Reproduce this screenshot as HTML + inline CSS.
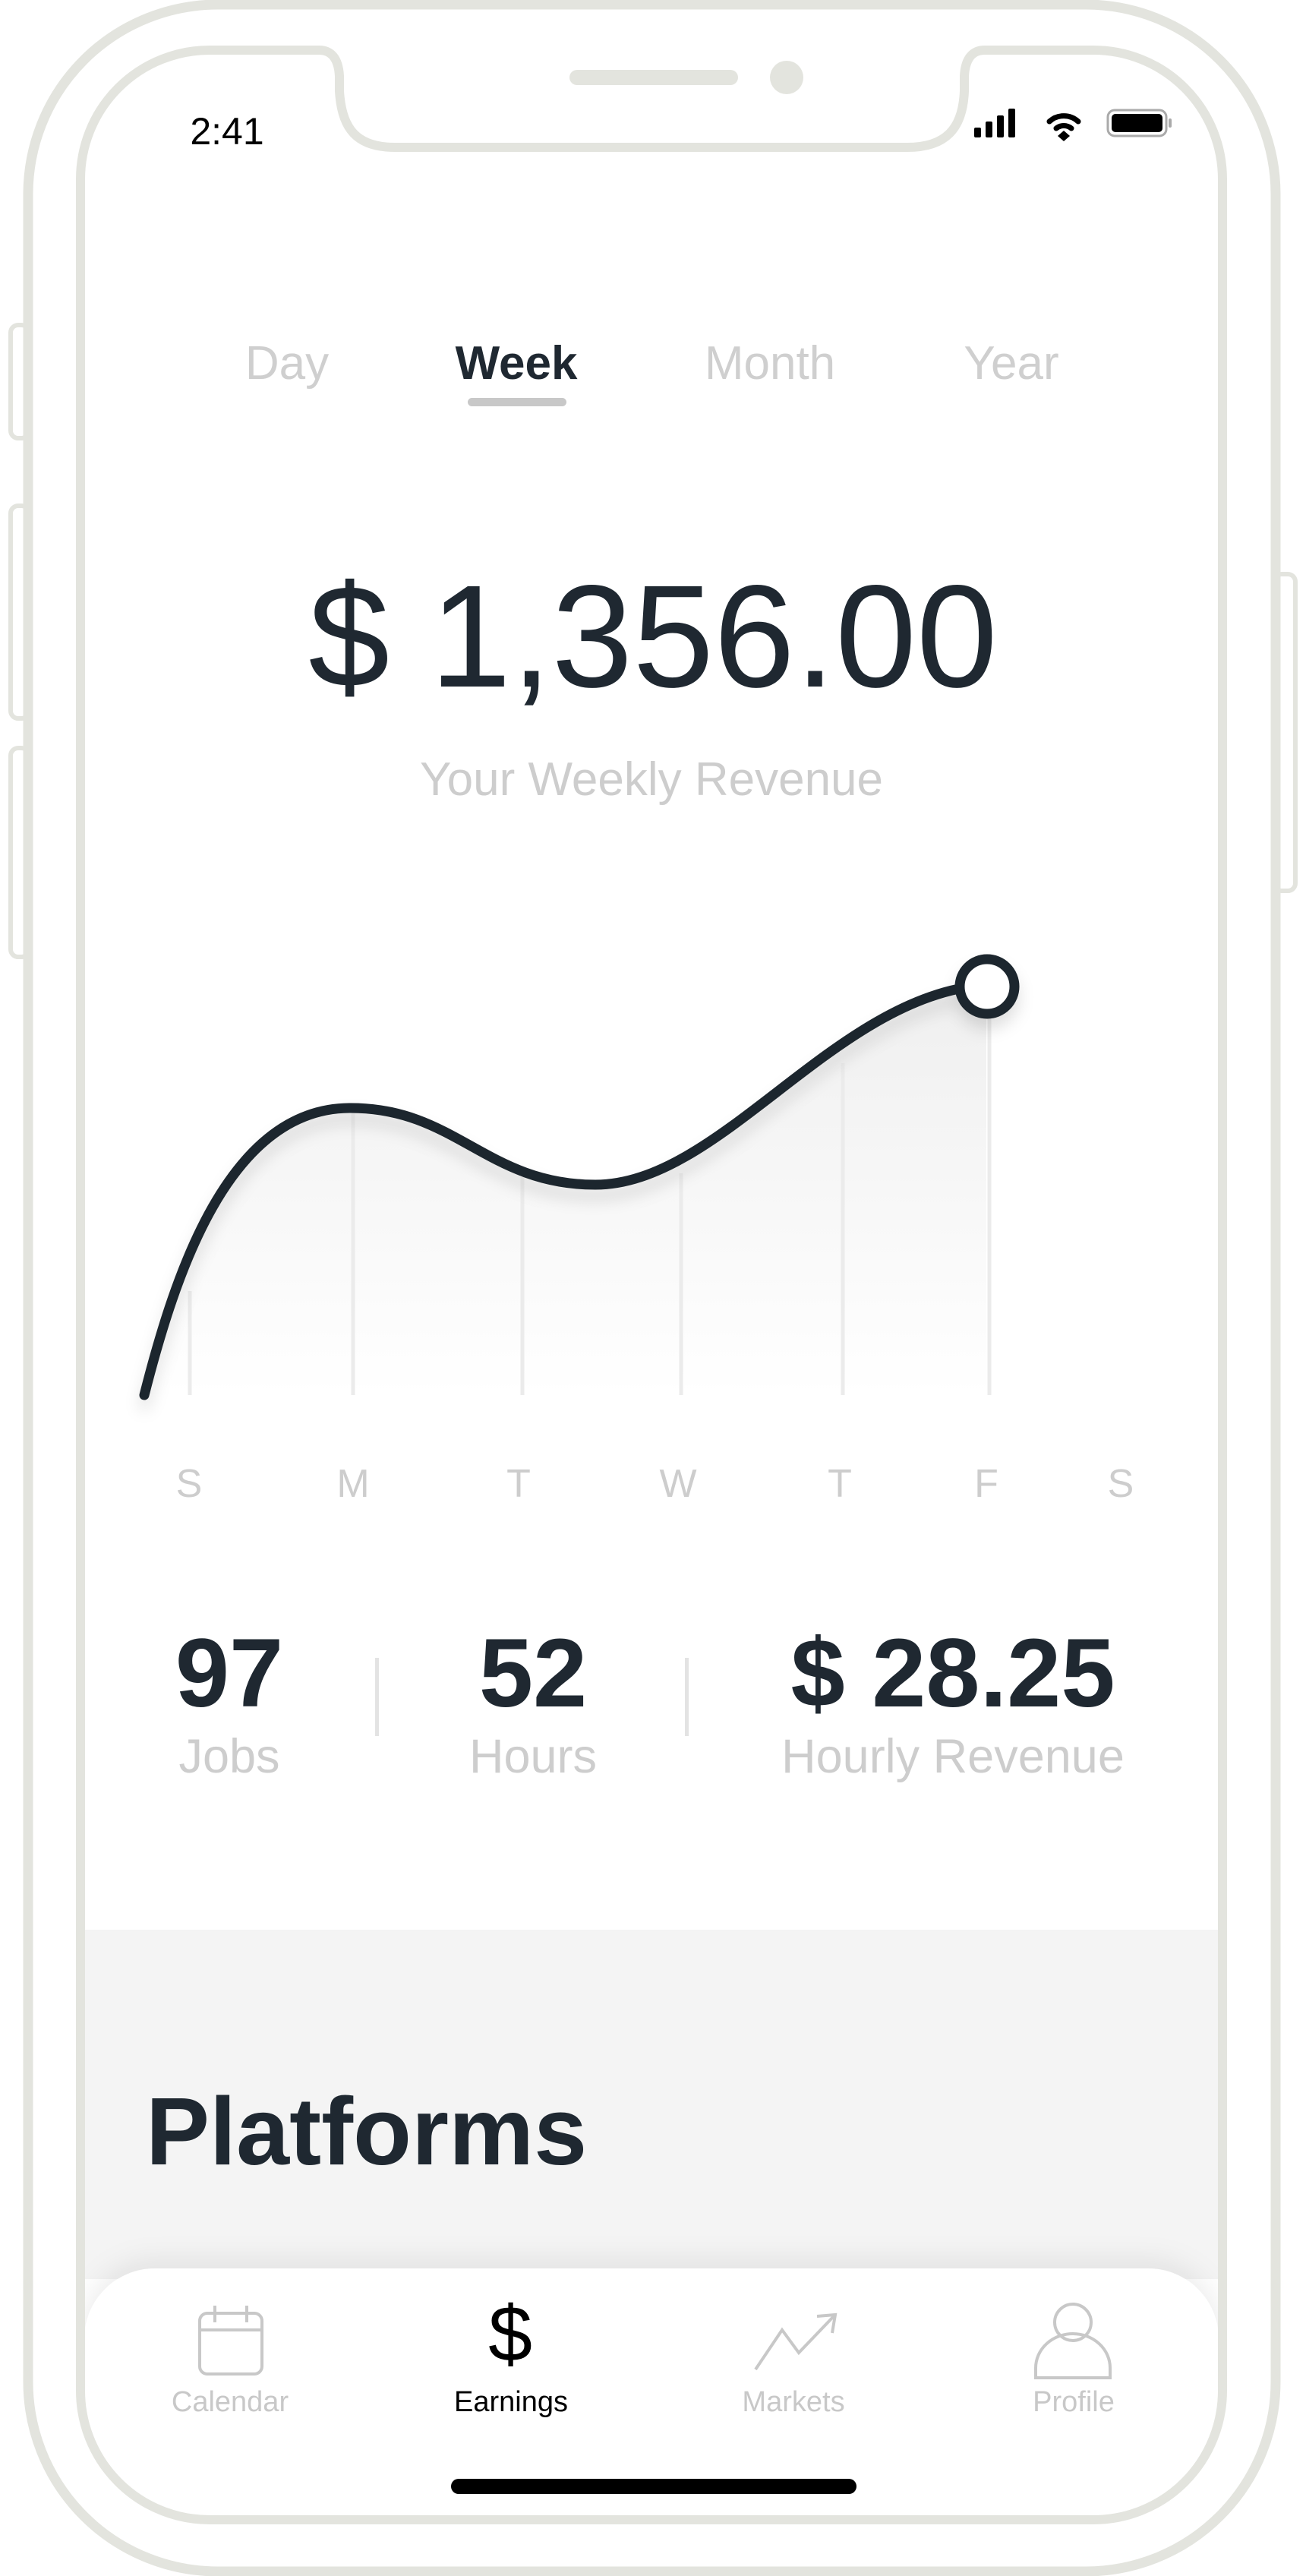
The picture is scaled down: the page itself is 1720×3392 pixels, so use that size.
<!DOCTYPE html>
<html><head><meta charset="utf-8"><style>
*{margin:0;padding:0;box-sizing:border-box}
html,body{width:1720px;height:3392px;background:#fff;overflow:hidden;font-family:"Liberation Sans",sans-serif}
.t{position:absolute;white-space:nowrap;transform:translateX(-50%);line-height:1}
</style></head><body>
<svg width="1720" height="3392" style="position:absolute;left:0;top:0">
<defs>
<linearGradient id="g" x1="0" y1="0" x2="0" y2="1">
<stop offset="0" stop-color="#efefef"/><stop offset="1" stop-color="#ffffff"/></linearGradient>
<filter id="sh" x="-20%" y="-20%" width="140%" height="140%"><feDropShadow dx="0" dy="14" stdDeviation="10" flood-color="#000" flood-opacity="0.12"/></filter>
<filter id="tb" x="-10%" y="-50%" width="120%" height="200%"><feDropShadow dx="0" dy="-10" stdDeviation="18" flood-color="#000" flood-opacity="0.08"/></filter>
<clipPath id="scr"><path d="M276,66 L1440,66 A170 170 0 0 1 1610 236 L1610 3148 A170 170 0 0 1 1440 3318 L276 3318 A170 170 0 0 1 106 3148 L106 236 A170 170 0 0 1 276 66 Z"/></clipPath>
</defs>
<g fill="#fff" stroke="#e3e4de" stroke-width="6">
<rect x="14" y="428" width="24" height="149" rx="10"/>
<rect x="14" y="666" width="24" height="280" rx="10"/>
<rect x="14" y="985" width="24" height="275" rx="10"/>
<rect x="1678" y="756" width="28" height="417" rx="10"/>
</g>
<rect x="37" y="6" width="1643" height="3380" rx="250" fill="#fff" stroke="#e3e4de" stroke-width="13"/>
<g clip-path="url(#scr)">
<rect x="100" y="2541" width="1520" height="460" fill="#f4f4f4"/>
<path d="M111,3080 A93 93 0 0 1 204 2987 L1512 2987 A93 93 0 0 1 1605 3080 L1605 3330 L111 3330Z" fill="#fff" filter="url(#tb)"/>
</g>
<path d="M276,66 L420,66 Q445,66 447,100 L447,120 C450,170 470,194 520,194 L1195,194 C1245,194 1268,170 1270,120 L1270,100 Q1272,66 1297,66 L1440,66 A170 170 0 0 1 1610 236 L1610 3148 A170 170 0 0 1 1440 3318 L276 3318 A170 170 0 0 1 106 3148 L106 236 A170 170 0 0 1 276 66 Z" fill="none" stroke="#e3e4de" stroke-width="12"/>
<rect x="750" y="92" width="222" height="20" rx="10" fill="#e3e4de"/>
<circle cx="1036" cy="102" r="22" fill="#e3e4de"/>
<g fill="#000">
<rect x="1283" y="168" width="9" height="13" rx="2"/>
<rect x="1298" y="160" width="9" height="21" rx="2"/>
<rect x="1313" y="152" width="9" height="29" rx="2"/>
<rect x="1328" y="143" width="9" height="38" rx="2"/>
</g>
<g fill="none" stroke="#000" stroke-width="7" stroke-linecap="round">
<path d="M1382,160 A28 28 0 0 1 1420,160"/><path d="M1391,169 A16 16 0 0 1 1411,169"/>
</g>
<path d="M1401,172 L1409,179 L1401,186 L1393,179Z" fill="#000"/>
<rect x="1459" y="145" width="77" height="34" rx="9" fill="none" stroke="#aaa" stroke-width="3"/>
<rect x="1464" y="150" width="67" height="24" rx="5" fill="#000"/>
<rect x="1539" y="156" width="4" height="12" rx="2" fill="#aaa"/>
<rect x="616" y="524" width="130" height="11" rx="5.5" fill="#c8c8c8"/>
<path d="M190,1837 C230,1680 300,1460 460,1459 C600,1458 640,1560 784,1560 C950,1560 1100,1310 1299,1297 L1299,1837 Z" fill="url(#g)"/>
<g stroke="#ebebeb" stroke-width="5">
<line x1="250" y1="1700" x2="250" y2="1837"/>
<line x1="465" y1="1465" x2="465" y2="1837"/>
<line x1="688" y1="1550" x2="688" y2="1837"/>
<line x1="897" y1="1545" x2="897" y2="1837"/>
<line x1="1110" y1="1400" x2="1110" y2="1837"/>
<line x1="1303" y1="1330" x2="1303" y2="1837"/>
</g>
<g filter="url(#sh)">
<path d="M190,1837 C230,1680 300,1460 460,1459 C600,1458 640,1560 784,1560 C950,1560 1100,1310 1299,1297" fill="none" stroke="#1f262d" stroke-width="13" stroke-linecap="round"/>
<circle cx="1300" cy="1299" r="36" fill="#fff" stroke="#1f262d" stroke-width="13"/>
</g>
<rect x="494" y="2183" width="5" height="103" fill="#e3e3e3"/>
<rect x="902" y="2183" width="5" height="103" fill="#e3e3e3"/>
<g fill="none" stroke="#c8c8c8" stroke-width="4">
<rect x="263" y="3046" width="82" height="80" rx="10"/>
<line x1="263" y1="3068" x2="345" y2="3068"/>
<line x1="283" y1="3036" x2="283" y2="3058"/><line x1="325" y1="3036" x2="325" y2="3058"/>
<path d="M995,3120 L1030,3068 L1052,3098 L1098,3050"/><path d="M1076,3050 L1100,3048 L1096,3072"/>
<circle cx="1413" cy="3058" r="24"/>
<path d="M1364,3131 L1364,3118 A49 45 0 0 1 1462 3118 L1462 3131 Z"/>
</g>
<rect x="594" y="3264" width="534" height="20" rx="10" fill="#000"/>
</svg>
<div class="t" style="left:299px;top:148px;font-size:50px;color:#000">2:41</div>
<div class="t" style="left:378px;top:448px;font-size:62px;color:#cfcfcf">Day</div>
<div class="t" style="left:680px;top:448px;font-size:62px;color:#1f2831;font-weight:bold">Week</div>
<div class="t" style="left:1014px;top:448px;font-size:62px;color:#cfcfcf">Month</div>
<div class="t" style="left:1332px;top:448px;font-size:62px;color:#cfcfcf">Year</div>
<div class="t" style="left:860px;top:742px;font-size:192px;color:#1f2831">$ 1,356.00</div>
<div class="t" style="left:858px;top:996px;font-size:62px;color:#cdcdcd">Your Weekly Revenue</div>
<div class="t" style="left:249px;top:1928px;font-size:52px;color:#cdcdcd">S</div>
<div class="t" style="left:465px;top:1928px;font-size:52px;color:#cdcdcd">M</div>
<div class="t" style="left:683px;top:1928px;font-size:52px;color:#cdcdcd">T</div>
<div class="t" style="left:893px;top:1928px;font-size:52px;color:#cdcdcd">W</div>
<div class="t" style="left:1106px;top:1928px;font-size:52px;color:#cdcdcd">T</div>
<div class="t" style="left:1299px;top:1928px;font-size:52px;color:#cdcdcd">F</div>
<div class="t" style="left:1476px;top:1928px;font-size:52px;color:#cdcdcd">S</div>
<div class="t" style="left:302px;top:2140px;font-size:128px;font-weight:bold;color:#1f2831">97</div>
<div class="t" style="left:702px;top:2140px;font-size:128px;font-weight:bold;color:#1f2831">52</div>
<div class="t" style="left:1255px;top:2140px;font-size:128px;font-weight:bold;color:#1f2831">$ 28.25</div>
<div class="t" style="left:302px;top:2282px;font-size:63px;color:#cdcdcd">Jobs</div>
<div class="t" style="left:702px;top:2282px;font-size:63px;color:#cdcdcd">Hours</div>
<div class="t" style="left:1255px;top:2282px;font-size:63px;color:#cdcdcd">Hourly Revenue</div>
<div style="position:absolute;left:192px;top:2744px;font-size:126px;font-weight:bold;color:#1f2831;line-height:1;white-space:nowrap">Platforms</div>
<div class="t" style="left:672px;top:3022px;font-size:104px;color:#000">$</div>
<div class="t" style="left:303px;top:3144px;font-size:38px;color:#c8c8c8">Calendar</div>
<div class="t" style="left:673px;top:3144px;font-size:38px;color:#000">Earnings</div>
<div class="t" style="left:1045px;top:3144px;font-size:38px;color:#c8c8c8">Markets</div>
<div class="t" style="left:1414px;top:3144px;font-size:38px;color:#c8c8c8">Profile</div>
</body></html>
